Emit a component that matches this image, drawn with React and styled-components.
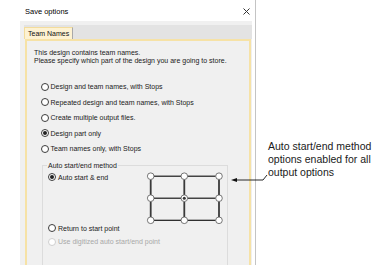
import React from "react";
import styled, { createGlobalStyle, css } from "styled-components";

const Global = createGlobalStyle`
  html, body { margin: 0; padding: 0; width: 379px; height: 265px; overflow: hidden; background: #fff; }
  body { font-family: "Liberation Sans", Arial, sans-serif; color: #1a1a1a; }
  #root { width: 379px; height: 265px; }
`;

const Page = styled.div`
  position: relative;
  display: flex;
  width: 379px;
  height: 265px;
`;

const Dialog = styled.div`
  box-sizing: border-box;
  width: 256px;
  height: 265px;
  border-right: 1px solid #c4c4c4;
  display: flex;
  flex-direction: column;
  overflow: hidden;
  flex: none;
`;

const TitleBar = styled.div`
  flex: none;
  height: 21px;
  box-sizing: border-box;
  padding: 1px 5.5px 0 25px;
  display: flex;
  align-items: center;
  justify-content: space-between;
  font-size: 7.5px;
  color: #000;
`;

const Body = styled.div`
  flex: 1;
  min-height: 0;
  margin-left: 20px;
  width: 232px;
  box-sizing: border-box;
  padding-top: 4px;
  background: #f0f0f0;
  display: flex;
  flex-direction: column;
`;

const TabStrip = styled.div`
  flex: none;
  height: 14px;
  margin-left: 4px;
  background: #e3e3e3;
  display: flex;
  align-items: flex-end;
`;

const Tab = styled.div`
  box-sizing: border-box;
  width: 49px;
  height: 12px;
  padding-left: 3px;
  background: #fdf2d2;
  border-top: 1px solid #f3dc9c;
  border-left: 1px solid #f3dc9c;
  border-right: 1px solid #a9a9a9;
  font-size: 7px;
  line-height: 11px;
  color: #111;
  white-space: nowrap;
`;

const Panel = styled.div`
  flex: 1;
  min-height: 0;
  margin-left: 5px;
  width: 226px;
  box-sizing: border-box;
  border: 2px solid #f6e2a6;
  border-bottom: none;
  padding: 8px 0 0 7px;
  display: flex;
  flex-direction: column;
`;

const Intro = styled.p`
  margin: 0;
  font-size: 7px;
  line-height: 8px;
  white-space: nowrap;
`;

const RadioList = styled.div`
  margin: 14px 0 0 6.5px;
  display: flex;
  flex-direction: column;
`;

const Option = styled.label`
  display: flex;
  align-items: center;
  gap: 2px;
  height: ${(p) => p.$h || 15.5}px;
  margin-top: ${(p) => p.$mt || 0}px;
  font-size: 7px;
  line-height: 9px;
  white-space: nowrap;
  color: ${(p) => (p.$disabled ? "#a8a8a8" : "#1a1a1a")};
`;

const Radio = styled.span`
  flex: none;
  box-sizing: border-box;
  width: 8px;
  height: 8px;
  border-radius: 50%;
  border: 1px solid ${(p) => (p.$disabled ? "#cfcfcf" : "#3c3c3c")};
  background: #fff;
  display: flex;
  align-items: center;
  justify-content: center;
  ${(p) =>
    p.$checked &&
    css`
      &::after {
        content: "";
        width: 4px;
        height: 4px;
        border-radius: 50%;
        background: #222;
      }
    `}
`;

const Group = styled.fieldset`
  flex: 1;
  min-width: 0;
  margin: 4px 0 0 8px;
  width: 186px;
  box-sizing: border-box;
  border: 1px solid #dcdcdc;
  border-bottom: none;
  padding: 2px 0 0 5px;
`;

const Legend = styled.legend`
  font-size: 7px;
  line-height: 9px;
  padding: 0 1px;
  margin-left: -1px;
  color: #1a1a1a;
  white-space: nowrap;
`;

const GroupTop = styled.div`
  display: grid;
  grid-template-columns: 98px 78px;
  align-items: start;
`;

const Note = styled.div`
  margin: 139.5px 0 0 12px;
  font-size: 10.5px;
  line-height: 13px;
  color: #1a1a1a;
`;

const NoteLine = styled.span`
  display: block;
  white-space: nowrap;
`;

const Leader = styled.svg`
  position: absolute;
  left: 228px;
  top: 172px;
  overflow: visible;
`;

const CloseIcon = () => (
  <svg width="7" height="7" viewBox="0 0 7 7">
    <path d="M0.5 0.5 L6.5 6.5 M6.5 0.5 L0.5 6.5" stroke="#333" strokeWidth="1" fill="none" />
  </svg>
);

const xs = [4.7, 38.3, 73];
const ys = [4.2, 26.2, 48.3];
const R = 3.3;

const PointGrid = () => (
  <svg width="78" height="52" viewBox="0 0 78 52" style={{ overflow: "visible" }}>
    {ys.map((y) =>
      [0, 1].map((i) => (
        <line key={`h${y}${i}`} x1={xs[i] + R} y1={y} x2={xs[i + 1] - R} y2={y} stroke="#1a1a1a" strokeWidth="1.2" />
      ))
    )}
    {xs.map((x) =>
      [0, 1].map((i) => (
        <line key={`v${x}${i}`} x1={x} y1={ys[i] + R} x2={x} y2={ys[i + 1] - R} stroke="#3a3a3a" strokeWidth="1.8" />
      ))
    )}
    {ys.map((y) =>
      xs.map((x) => (
        <circle key={`c${x}${y}`} cx={x} cy={y} r={R} fill="#fff" stroke="#555" strokeWidth="0.8" />
      ))
    )}
    <circle cx={xs[1]} cy={ys[1]} r="1.5" fill="#333" />
  </svg>
);

const options = [
  { label: "Design and team names, with Stops" },
  { label: "Repeated design and team names, with Stops" },
  { label: "Create multiple output files." },
  { label: "Design part only", checked: true },
  { label: "Team names only, with Stops" },
];

export default function App() {
  return (
    <>
      <Global />
      <Page>
        <Dialog>
          <TitleBar>
            <span>Save options</span>
            <CloseIcon />
          </TitleBar>
          <Body>
            <TabStrip>
              <Tab>Team Names</Tab>
            </TabStrip>
            <Panel>
              <Intro>
                This design contains team names.
                <br />
                Please specify which part of the design you are going to store.
              </Intro>
              <RadioList>
                {options.map((o) => (
                  <Option key={o.label}>
                    <Radio $checked={o.checked} />
                    {o.label}
                  </Option>
                ))}
              </RadioList>
              <Group>
                <Legend>Auto start/end method</Legend>
                <GroupTop>
                  <Option $h={9} $mt={1}>
                    <Radio $checked />
                    Auto start &amp; end
                  </Option>
                  <PointGrid />
                </GroupTop>
                <Option $h={9}>
                  <Radio />
                  Return to start point
                </Option>
                <Option $h={9} $mt={4.7} $disabled>
                  <Radio $disabled />
                  Use digitized auto start/end point
                </Option>
              </Group>
            </Panel>
          </Body>
        </Dialog>
        <Note>
          <NoteLine>Auto start/end method</NoteLine>
          <NoteLine>options enabled for all</NoteLine>
          <NoteLine>output options</NoteLine>
        </Note>
        <Leader width="44" height="12" viewBox="0 0 44 12">
          <path d="M3 8 L9 6 L9 10 Z" fill="#111" />
          <path d="M8 8 L35 8 L39 3" stroke="#111" strokeWidth="0.9" fill="none" />
        </Leader>
      </Page>
    </>
  );
}
